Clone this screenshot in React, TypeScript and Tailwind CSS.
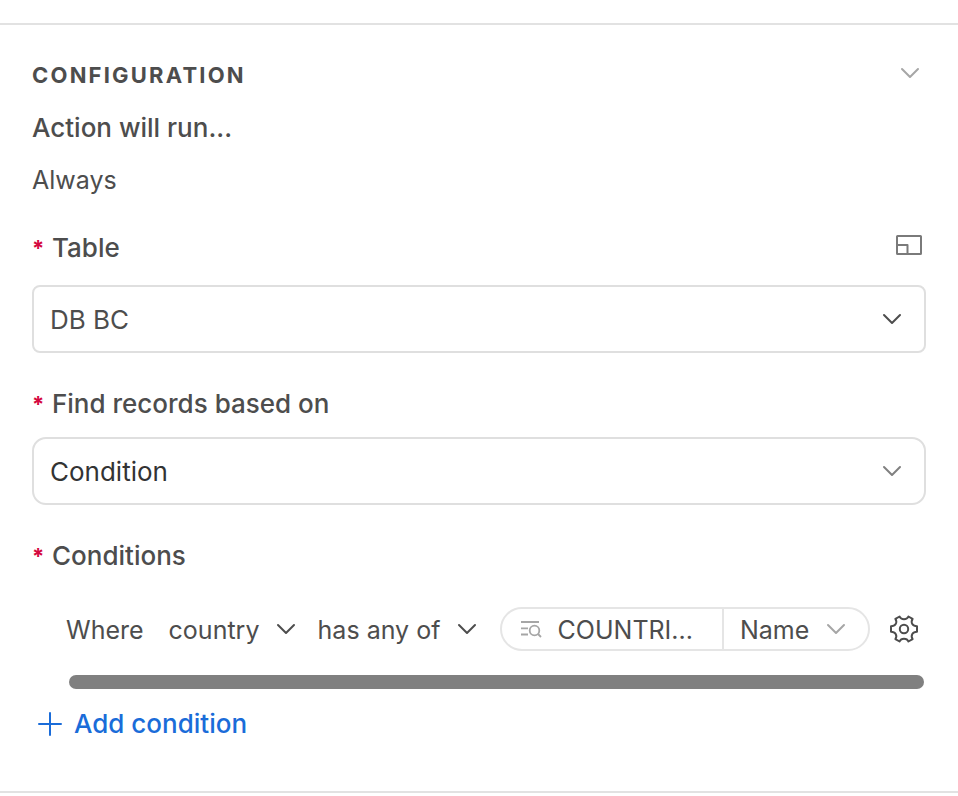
import { useState } from 'react';
import clsx from 'clsx';

type IconProps = { className?: string };

function Chevron({ className }: IconProps) {
    return (
        <svg viewBox="0 0 20 12" fill="none" stroke="currentColor" strokeWidth="2" strokeLinecap="round" strokeLinejoin="round" className={clsx('w-5 h-3 shrink-0', className)} aria-hidden="true">
            <path d="M2 2l8 8 8-8" />
        </svg>
    );
}

function LayoutIcon({ className }: IconProps) {
    return (
        <svg viewBox="0 0 28 22" fill="none" stroke="currentColor" strokeWidth="2" strokeLinejoin="round" className={className} aria-hidden="true">
            <rect x="2" y="2" width="24" height="18" rx="0.5" />
            <path d="M2 11h10.5v9" />
        </svg>
    );
}

function LookupIcon({ className }: IconProps) {
    return (
        <svg viewBox="0 0 22 18" fill="none" stroke="currentColor" strokeWidth="1.8" className={className} aria-hidden="true">
            <path d="M1 2h18M1 8.300h7M1 14.500h7" />
            <circle cx="14.500" cy="10.500" r="4.800" />
            <path d="M18 14l3 3" />
        </svg>
    );
}

function GearIcon({ className }: IconProps) {
    return (
        <svg viewBox="0 0 28 28" fill="none" stroke="currentColor" strokeWidth="2" strokeLinejoin="round" className={className} aria-hidden="true">
            <path d="M9.600 1.500Q10.700 4.300 14 4.300Q17.300 4.300 18.400 1.500L22.600 3.900Q20.900 6.600 22.300 9Q23.700 11.300 27 11.300V16.700Q23.700 16.700 22.300 19Q20.900 21.400 22.600 24.100L18.400 26.500Q17.300 23.700 14 23.700Q10.700 23.700 9.600 26.500L5.400 24.100Q7.100 21.400 5.700 19Q4.300 16.700 1 16.700V11.300Q4.300 11.300 5.700 9Q7.100 6.600 5.400 3.900Z" />
            <circle cx="14" cy="14" r="4.200" />
        </svg>
    );
}

function Required() {
    return <span className="w-5 shrink-0 text-[22px] font-bold text-[#d4093f]" aria-hidden="true">*</span>;
}

type SelectFieldProps = {
    id: string;
    value: string;
    className?: string;
    chevronClass: string;
};

function SelectField({ id, value, className, chevronClass }: SelectFieldProps) {
    return (
        <div className="grid items-center">
            <select id={id} className={clsx('col-start-1 row-start-1 appearance-none w-full h-[68px] border-2 border-[#dfdfdf] bg-white pt-0.5 pl-4 pr-14 text-[26px]', className)}>
                <option>{value}</option>
            </select>
            <Chevron className={clsx('col-start-1 row-start-1 justify-self-end mr-6 pointer-events-none', chevronClass)} />
        </div>
    );
}

type InlineSelectProps = {
    label: string;
    value: string;
    chevronClass?: string;
};

function InlineSelect({ label, value, chevronClass }: InlineSelectProps) {
    return (
        <div className="grid items-center">
            <select aria-label={label} className="col-start-1 row-start-1 appearance-none bg-transparent h-10 pt-0.5 pr-9">
                <option>{value}</option>
            </select>
            <Chevron className={clsx('col-start-1 row-start-1 justify-self-end pointer-events-none', chevronClass)} />
        </div>
    );
}

export default function App() {
    const [open, setOpen] = useState(true);

    return (
        <main className="bg-white pt-[23px] font-['Inter','Liberation_Sans',sans-serif] text-[25px] leading-8 text-[#4d4d4d]">
            <section className="border-y-2 border-[#e2e2e2] px-8 pt-[34px] pb-[51px]">
                <div className="flex items-center justify-between">
                    <h2 className="text-[22px] font-bold tracking-widest uppercase">Configuration</h2>
                    <button type="button" aria-label="Toggle configuration" aria-expanded={open} onClick={() => setOpen(!open)} className="mr-1.5 pb-1 text-[#a6a6a6]">
                        <Chevron />
                    </button>
                </div>

                {open && (
                    <>
                        <p className="mt-[21px] text-[26px] leading-8 font-medium">Action will run...</p>
                        <p className="mt-5">Always</p>

                        <div className="mt-9 mb-[21px] flex items-center justify-between">
                            <label htmlFor="table" className="flex text-[26px] leading-8 font-medium">
                                <Required />
                                Table
                            </label>
                            <button type="button" aria-label="Open table" className="mr-[3px] pb-1.5 text-[#7a7a7a]">
                                <LayoutIcon className="w-7 h-[22px]" />
                            </button>
                        </div>
                        <SelectField id="table" value="DB BC" className="rounded-lg" chevronClass="text-[#4d4d4d]" />

                        <label htmlFor="basis" className="mt-[35px] mb-[17px] flex text-[26px] leading-8 font-medium">
                            <Required />
                            Find records based on
                        </label>
                        <SelectField id="basis" value="Condition" className="rounded-[14px] text-[#333333]" chevronClass="text-[#808080]" />

                        <h3 className="mt-[35px] flex text-[26px] leading-8 font-medium">
                            <Required />
                            Conditions
                        </h3>

                        <div className="mt-[35px] flex h-11 items-center pl-[34px]">
                            <span className="mr-[25px] pt-0.5">Where</span>
                            <InlineSelect label="Field" value="country" />
                            <span className="w-[22px]" />
                            <InlineSelect label="Operator" value="has any of" />
                            <div className="ml-[23px] flex h-11 flex-1 items-stretch rounded-full border-2 border-[#e5e5e5]">
                                <button type="button" className="flex min-w-0 flex-1 items-center gap-4 border-r-2 border-[#e5e5e5] pl-[18px]">
                                    <LookupIcon className="h-[18px] w-[22px] shrink-0 text-[#a6a6a6]" />
                                    <span className="pt-0.5">COUNTRI...</span>
                                </button>
                                <div className="flex items-center pr-[22px] pl-4">
                                    <InlineSelect label="Lookup property" value="Name" chevronClass="text-[#a6a6a6]" />
                                </div>
                            </div>
                            <button type="button" aria-label="Condition settings" className="mr-2 ml-5">
                                <GearIcon className="size-7" />
                            </button>
                        </div>

                        <div className="mt-6 mr-0.5 ml-[37px] h-3.5 rounded-full bg-[#808080]" />

                        <button type="button" className="mt-[19px] flex items-center gap-3 pl-1.5 text-[26px] leading-8 font-medium text-[#1a6cd9]">
                            <svg viewBox="0 0 24 24" stroke="currentColor" strokeWidth="2" strokeLinecap="round" className="size-6" aria-hidden="true">
                                <path d="M12 1v22M1 12h22" />
                            </svg>
                            Add condition
                        </button>
                    </>
                )}
            </section>
        </main>
    );
}
